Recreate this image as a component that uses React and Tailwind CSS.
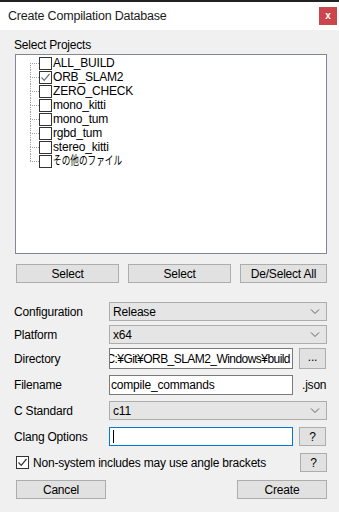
import React from "react";

const projects = [
  { name: "ALL_BUILD", checked: false },
  { name: "ORB_SLAM2", checked: true },
  { name: "ZERO_CHECK", checked: false },
  { name: "mono_kitti", checked: false },
  { name: "mono_tum", checked: false },
  { name: "rgbd_tum", checked: false },
  { name: "stereo_kitti", checked: false },
  { name: "その他のファイル", checked: false, jp: true },
];

const CheckMark = ({ color = "#444" }) => (
  <svg width="11" height="11" viewBox="0 0 11 11">
    <path d="M1.5 5.5 L4.2 8.3 L9.5 2" fill="none" stroke={color} strokeWidth="1.2" />
  </svg>
);

const Chevron = () => (
  <svg width="10" height="6" viewBox="0 0 10 6">
    <path d="M1 0.5 L5 4.5 L9 0.5" fill="none" stroke="#606060" strokeWidth="1" />
  </svg>
);

const Button = ({ className = "", children }) => (
  <div
    className={`flex items-center justify-center border border-[#adadad] bg-[#e1e1e1] text-[12px] text-black ${className}`}
  >
    {children}
  </div>
);

const Combo = ({ value }) => (
  <div className="flex h-[19px] w-[218px] items-center justify-between border border-[#adadad] bg-[#e5e5e5] pl-[3px] pr-[6px] text-[12px]">
    <span>{value}</span>
    <Chevron />
  </div>
);

const Row = ({ label, top, children }) => (
  <div className={`flex items-center ${top}`}>
    <div className="w-[95px] text-[12px]">{label}</div>
    {children}
  </div>
);

export default function App() {
  return (
    <div
      className="flex h-[512px] w-[339px] flex-col overflow-hidden bg-[#f0f0f0] tracking-[-0.2px] text-black"
      style={{ fontFamily: '"Liberation Sans", "Noto Sans CJK JP", sans-serif' }}
    >
      <div className="h-[2px] bg-[#222]" />
      <div className="flex h-[28px] items-center justify-between bg-white pl-[8px] pr-[2px]">
        <span className="text-[12.5px] text-[#1a1a1a]">Create Compilation Database</span>
        <div className="flex h-[18px] w-[18px] items-center justify-center bg-[#c9474d] text-[10px] font-bold leading-none text-white">
          x
        </div>
      </div>

      <div className="flex flex-col pl-[14px] pr-[12px]">
        <div className="mt-[8px] h-[14px] text-[12px] leading-[14px]">Select Projects</div>

        <div className="ml-[1px] mt-[2px] h-[200px] border border-[#828790] bg-white pt-[1px]">
          {projects.map((p, i) => (
            <div key={p.name} className="flex h-[14px] items-stretch pl-[14px]">
              <div className="flex w-[9px] flex-col">
                <div
                  className={`flex-1 ${i === 0 ? "" : "border-l border-dotted border-[#a0a0a0]"}`}
                />
                <div
                  className={`flex-1 border-t border-dotted border-[#a0a0a0] ${
                    i === projects.length - 1 ? "" : "border-l"
                  }`}
                />
              </div>
              <div className="flex items-center">
                <div className="flex h-[13px] w-[13px] items-center justify-center border border-[#333] bg-white">
                  {p.checked && <CheckMark color="#6a7280" />}
                </div>
                {p.jp ? (
                  <span className="ml-[1px] inline-block origin-left scale-x-[0.72] text-[12px] leading-[14px] tracking-normal">
                    {p.name}
                  </span>
                ) : (
                  <span className="ml-[1px] text-[12px] leading-[14px]">{p.name}</span>
                )}
              </div>
            </div>
          ))}
        </div>

        <div className="ml-[2px] mt-[10px] flex h-[19px] gap-[9px]">
          <Button className="w-[103px]">Select</Button>
          <Button className="w-[103px]">Select</Button>
          <Button className="w-[87px]">De/Select All</Button>
        </div>

        <Row label="Configuration" top="mt-[19px]">
          <Combo value="Release" />
        </Row>
        <Row label="Platform" top="mt-[4px]">
          <Combo value="x64" />
        </Row>
        <Row label="Directory" top="mt-[4px]">
          <div className="flex h-[21px] w-[184px] items-center justify-end overflow-hidden border border-[#7a7a7a] bg-white pr-[2px] text-[12px]">
            <span className="shrink-0 whitespace-nowrap tracking-[-0.55px]">C:¥Git¥ORB_SLAM2_Windows¥build</span>
          </div>
          <Button className="ml-[6px] h-[21px] w-[27px] pb-[3px] text-[9px]">...</Button>
        </Row>
        <Row label="Filename" top="mt-[6px]">
          <div className="flex h-[20px] w-[184px] items-center border border-[#7a7a7a] bg-white pl-[1px] text-[12px]">
            compile_commands
          </div>
          <span className="ml-[9px] text-[12px]">.json</span>
        </Row>
        <Row label="C Standard" top="mt-[6px]">
          <Combo value="c11" />
        </Row>
        <Row label="Clang Options" top="mt-[7px]">
          <div className="flex h-[19px] w-[184px] items-center border border-[#0078d7] bg-white pl-[3px]">
            <div className="h-[13px] w-px bg-black" />
          </div>
          <Button className="ml-[6px] h-[19px] w-[27px] text-[11px]">?</Button>
        </Row>
        <div className="mt-[7px] flex h-[19px] items-center justify-between">
          <div className="flex items-center pl-[2px]">
            <div className="flex h-[13px] w-[13px] items-center justify-center border border-[#333] bg-white">
              <CheckMark color="#333" />
            </div>
            <span className="ml-[4px] text-[12px]">Non-system includes may use angle brackets</span>
          </div>
          <Button className="h-[19px] w-[27px] text-[11px]">?</Button>
        </div>
        <div className="mt-[8px] flex h-[19px] justify-between pl-[2px]">
          <Button className="w-[90px]">Cancel</Button>
          <Button className="w-[90px]">Create</Button>
        </div>
      </div>
    </div>
  );
}
